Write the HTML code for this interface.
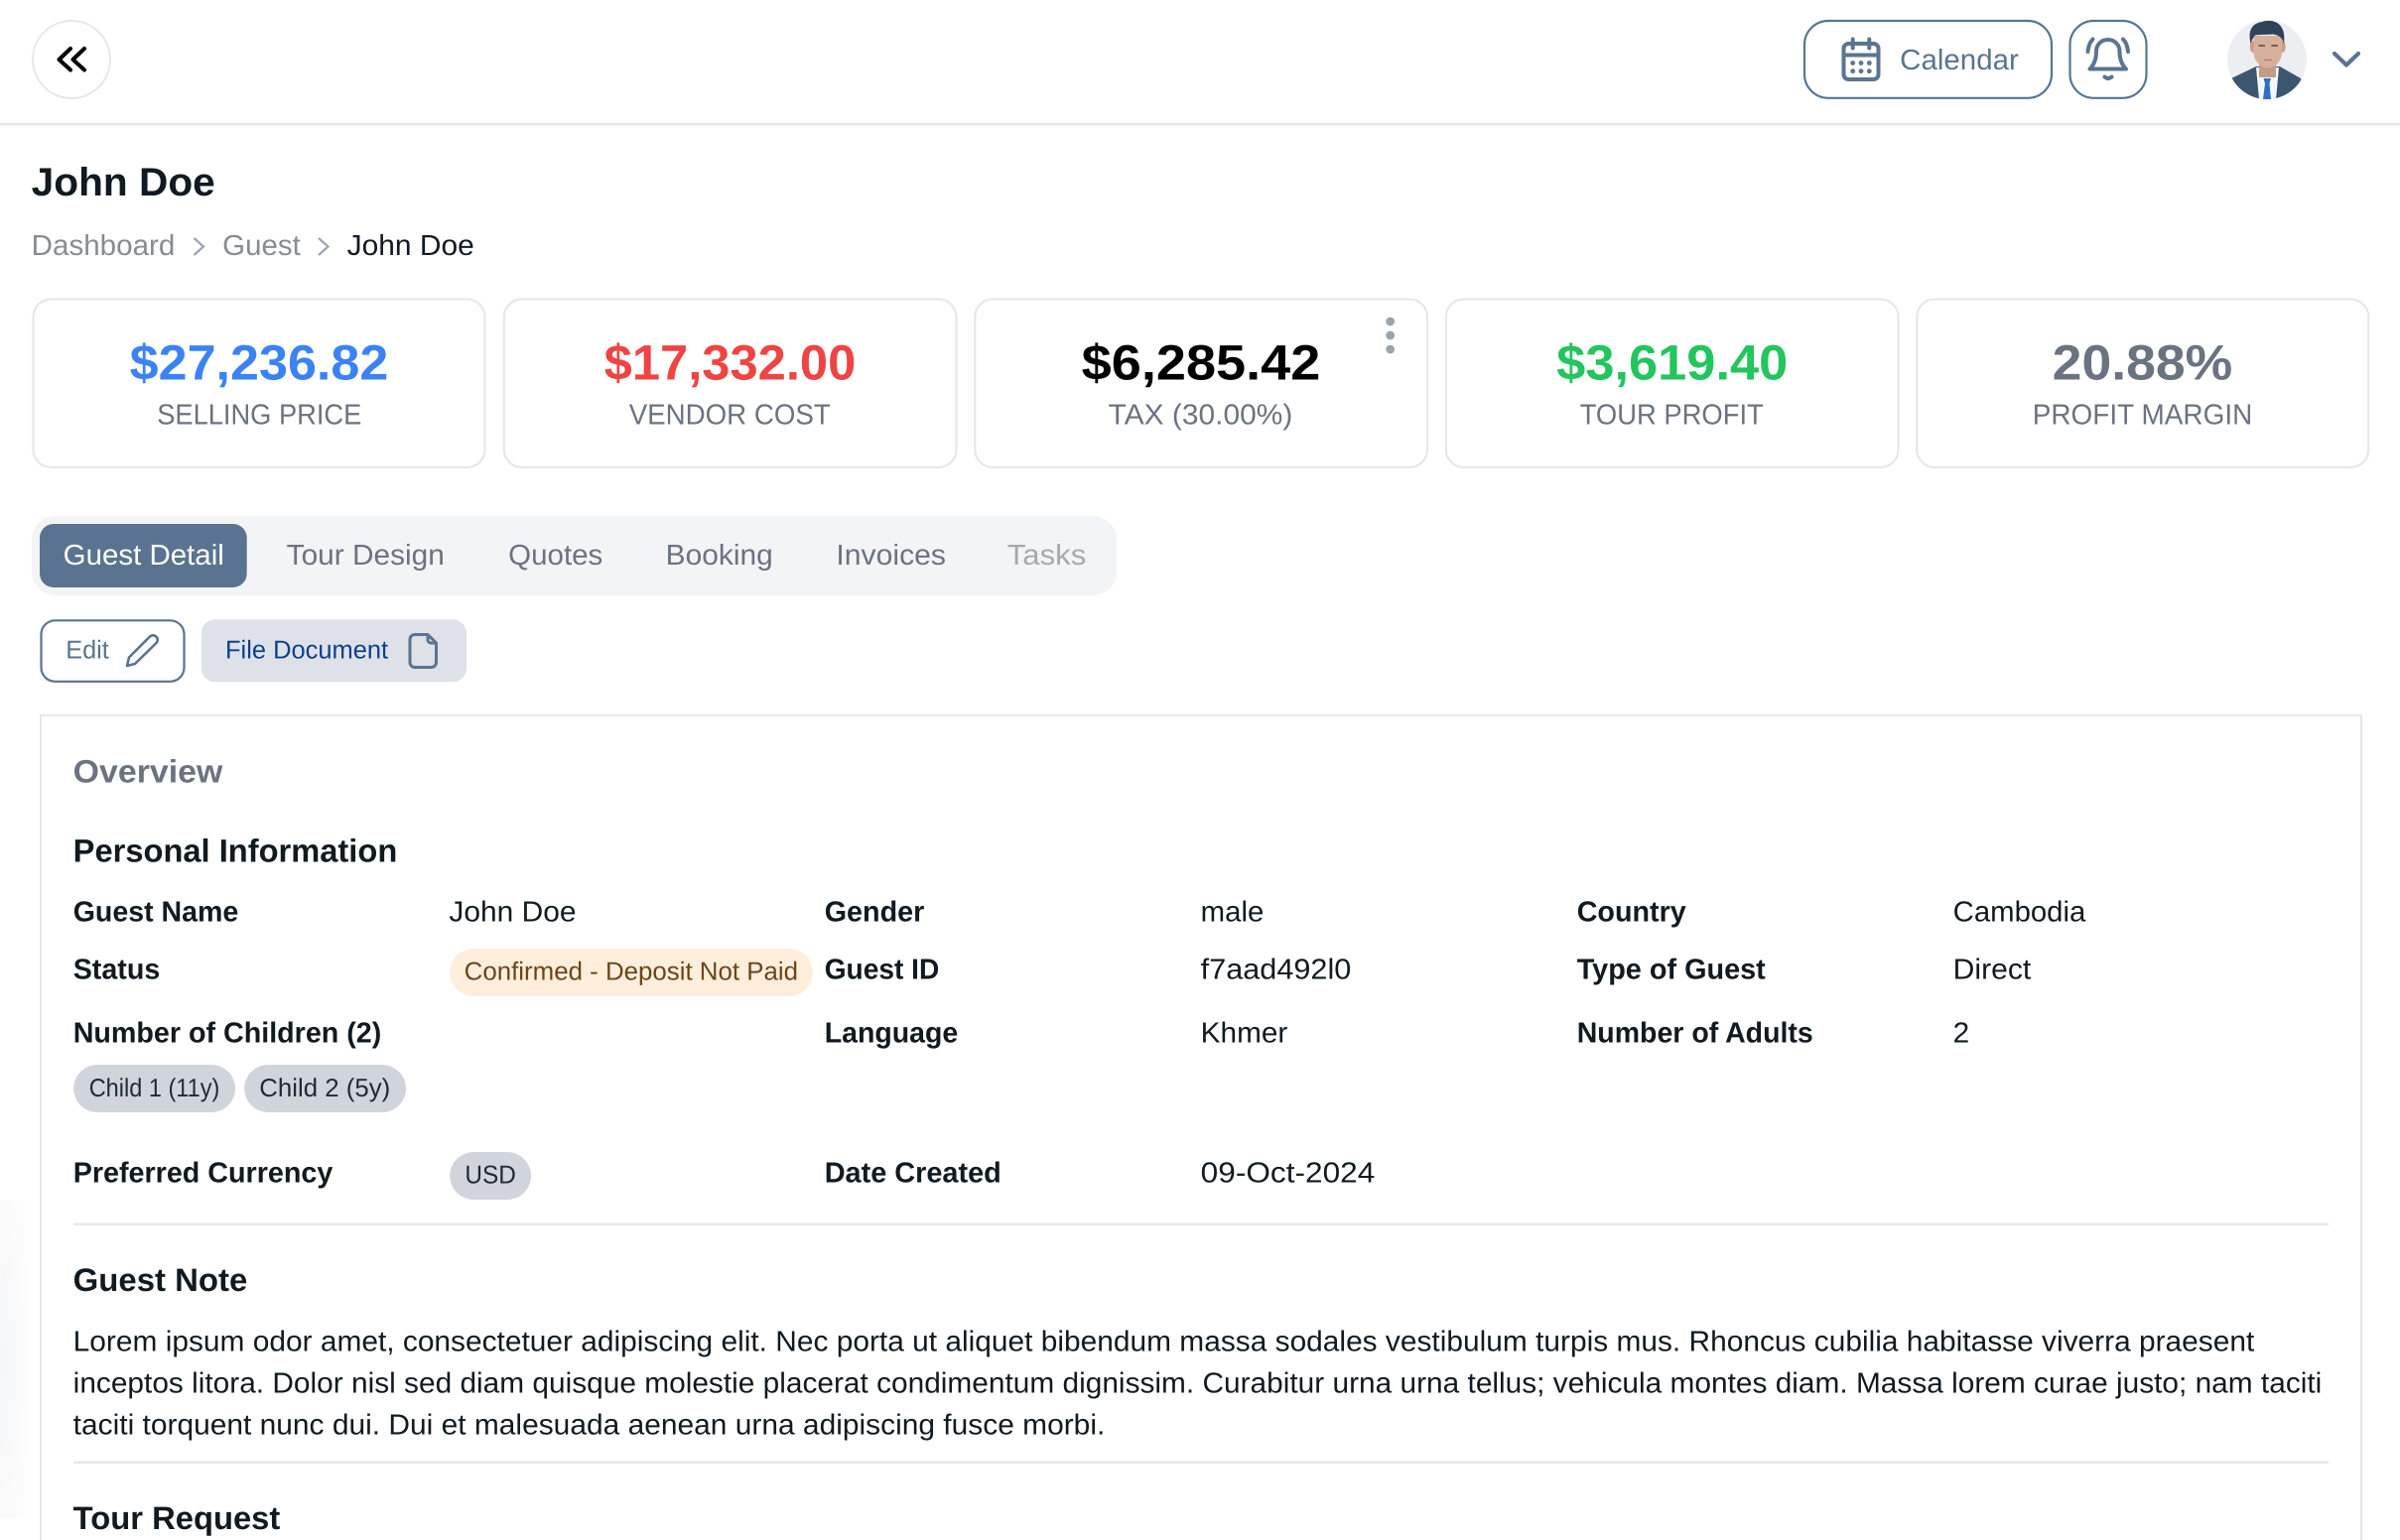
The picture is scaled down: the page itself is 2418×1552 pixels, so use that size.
<!DOCTYPE html>
<html lang="en">
<head>
<meta charset="utf-8">
<title>John Doe - Guest</title>
<style>
html,body{margin:0;padding:0;background:#fff;width:2418px;height:1552px;overflow:hidden}
svg{display:block}
text{font-family:"Liberation Sans",Arial,sans-serif;text-rendering:geometricPrecision;white-space:pre}
.b{font-weight:700}
.t{font-size:29px;fill:#111a20}
.l{font-size:29px;fill:#111a20;font-weight:700}
.h{font-size:32.5px;fill:#111a20;font-weight:700}
.n{font-size:50px;font-weight:700}
.c{font-size:29px;fill:#6b7280}
.tab{font-size:29px;fill:#6b7280}
.s{font-size:25.8px}
</style>
</head>
<body>
<svg xmlns="http://www.w3.org/2000/svg" width="2418" height="1552" viewBox="0 0 2418 1552">
<defs>
<clipPath id="av"><circle cx="2284" cy="60" r="40"/></clipPath>
<radialGradient id="sh" cx="0" cy="0.5" r="1" fx="0" fy="0.5"><stop offset="0" stop-color="#f5f6f7"/><stop offset="0.6" stop-color="#fbfbfc"/><stop offset="1" stop-color="#fff"/></radialGradient>
</defs>
<rect width="2418" height="1552" fill="#fff"/>
<rect x="0" y="1210" width="36" height="320" fill="url(#sh)"/>

<!-- top bar -->
<rect x="0" y="124" width="2418" height="2.5" fill="#e5e7eb"/>
<circle cx="72" cy="60" r="39" fill="#fff" stroke="#e5e7eb" stroke-width="2"/>
<path d="M71 49 L59.5 60 L71 70.5 M85 49 L73.5 60 L85 70.5" fill="none" stroke="#000" stroke-width="4" stroke-linecap="round" stroke-linejoin="round"/>

<rect x="1818" y="21" width="249" height="77.8" rx="24" fill="#fff" stroke="#5a7491" stroke-width="2.2"/>
<g fill="none" stroke="#5a7491" stroke-width="4" stroke-linecap="round" stroke-linejoin="round">
<rect x="1857.5" y="44" width="35" height="36" rx="5"/>
<path d="M1857.5 55.5 H1892.5 M1866.7 39.5 V48.5 M1883.3 39.5 V48.5"/>
</g>
<g fill="#5a7491">
<circle cx="1866.7" cy="63.5" r="2.4"/><circle cx="1875" cy="63.5" r="2.4"/><circle cx="1883.3" cy="63.5" r="2.4"/>
<circle cx="1866.7" cy="71.7" r="2.4"/><circle cx="1875" cy="71.7" r="2.4"/><circle cx="1883.3" cy="71.7" r="2.4"/>
</g>
<text x="1914.2" y="70" font-size="29" fill="#5a7491" textLength="119.6" lengthAdjust="spacingAndGlyphs">Calendar</text>

<rect x="2085.5" y="21" width="77" height="77.8" rx="24" fill="#fff" stroke="#5a7491" stroke-width="2.2"/>
<g fill="none" stroke="#5a7491" stroke-width="4" stroke-linecap="round" stroke-linejoin="round">
<path d="M2105.5 69.5 H2142 C2136.5 64 2135.5 58 2135.5 52 C2135.5 44.5 2130 40 2123.7 40 C2117.5 40 2112 44.5 2112 52 C2112 58 2111 64 2105.5 69.5 Z"/>
<path d="M2103.5 52 C2104 46.5 2105.5 42.5 2108.5 39.5 M2144 52 C2143.5 46.5 2142 42.5 2139 39.5"/>
<path d="M2120.5 77.5 Q2124 80.5 2127.5 77.5"/>
</g>

<g clip-path="url(#av)">
<rect x="2244" y="20" width="80" height="80" fill="#eceef1"/>
<path d="M2248 79 L2273 67 H2297 L2318 79 L2326 100 H2242 Z" fill="#3d5670"/>
<path d="M2273 68 L2296 68 L2293 100 H2276 Z" fill="#f7f8fb"/>
<path d="M2280.5 79 H2288 L2286.5 84 L2288 100 H2280 L2282 84 Z" fill="#2d6fc7"/>
<rect x="2276" y="58" width="17" height="20" fill="#c29c87"/>
<ellipse cx="2270" cy="47" rx="3.2" ry="6" fill="#d09a88"/>
<ellipse cx="2299.5" cy="47" rx="3.2" ry="6" fill="#d09a88"/>
<path d="M2270.5 36 H2299 V52 C2299 63 2291 68.5 2285 68.5 C2279 68.5 2270.5 63 2270.5 52 Z" fill="#d6b09b"/>
<path d="M2267.5 44 C2265 33 2267 24 2279 22 C2290 18.5 2304 23 2301 44 C2299.5 38.5 2297 35.5 2290 34.5 C2283 35 2275 35 2272 35.5 C2270 38 2269 40 2267.5 44 Z" fill="#2f4257"/>
<path d="M2275.5 46 h6.5 M2288.5 46 h6.5" stroke="#6a5650" stroke-width="1.8"/>
<path d="M2281 60.5 h8" stroke="#bd7d6c" stroke-width="1.6"/>
</g>
<path d="M2352 54 L2364 65.5 L2376 54" fill="none" stroke="#5a7491" stroke-width="4.2" stroke-linecap="round" stroke-linejoin="round"/>

<!-- title -->
<text x="31.7" y="197" class="b" font-size="40" fill="#111a20" textLength="185.1" lengthAdjust="spacingAndGlyphs">John Doe</text>
<text x="31.7" y="257" font-size="29" fill="#878c93" textLength="144.6" lengthAdjust="spacingAndGlyphs">Dashboard</text>
<path d="M195.5 240 L205 248.5 L195.5 257 M321 240 L330.5 248.5 L321 257" fill="none" stroke="#9ca3af" stroke-width="2.2"/>
<text x="224.2" y="257" font-size="29" fill="#878c93" textLength="78.6" lengthAdjust="spacingAndGlyphs">Guest</text>
<text x="349.7" y="257" font-size="29" fill="#111827" textLength="128.1" lengthAdjust="spacingAndGlyphs">John Doe</text>

<!-- stat cards -->
<g fill="#fff" stroke="#e5e7eb" stroke-width="2.2">
<rect x="33.5" y="301.5" width="455" height="169.5" rx="18"/>
<rect x="507.8" y="301.5" width="455.7" height="169.5" rx="18"/>
<rect x="982.3" y="301.5" width="455.7" height="169.5" rx="18"/>
<rect x="1456.8" y="301.5" width="455.7" height="169.5" rx="18"/>
<rect x="1931.3" y="301.5" width="455" height="169.5" rx="18"/>
</g>
<text x="130.7" y="382.7" class="n" fill="#3b82f6" textLength="260.6" lengthAdjust="spacingAndGlyphs">$27,236.82</text>
<text x="158.2" y="427.7" class="c" textLength="206.1" lengthAdjust="spacingAndGlyphs">SELLING PRICE</text>
<text x="608.7" y="382.7" class="n" fill="#ef4444" textLength="253.6" lengthAdjust="spacingAndGlyphs">$17,332.00</text>
<text x="633.7" y="427.7" class="c" textLength="203.1" lengthAdjust="spacingAndGlyphs">VENDOR COST</text>
<text x="1089.7" y="382.7" class="n" fill="#000" textLength="240.6" lengthAdjust="spacingAndGlyphs">$6,285.42</text>
<text x="1116.7" y="427.7" class="c" textLength="185.6" lengthAdjust="spacingAndGlyphs">TAX (30.00%)</text>
<g fill="#9ca3af"><circle cx="1400.7" cy="324" r="4.4"/><circle cx="1400.7" cy="338" r="4.4"/><circle cx="1400.7" cy="352" r="4.4"/></g>
<text x="1568.2" y="382.7" class="n" fill="#22c55e" textLength="233.1" lengthAdjust="spacingAndGlyphs">$3,619.40</text>
<text x="1591.7" y="427.7" class="c" textLength="185.1" lengthAdjust="spacingAndGlyphs">TOUR PROFIT</text>
<text x="2067.7" y="382.7" class="n" fill="#6b7280" textLength="181.6" lengthAdjust="spacingAndGlyphs">20.88%</text>
<text x="2047.7" y="427.7" class="c" textLength="221.6" lengthAdjust="spacingAndGlyphs">PROFIT MARGIN</text>

<!-- tabs -->
<rect x="32" y="520" width="1093" height="80" rx="24" fill="#f3f4f6"/>
<rect x="40" y="528" width="208.7" height="64" rx="14" fill="#5a7390"/>
<text x="63.7" y="569" class="tab" style="fill:#fff" textLength="162.1" lengthAdjust="spacingAndGlyphs">Guest Detail</text>
<text x="288.7" y="569" class="tab" textLength="159.1" lengthAdjust="spacingAndGlyphs">Tour Design</text>
<text x="512.2" y="569" class="tab" textLength="95.1" lengthAdjust="spacingAndGlyphs">Quotes</text>
<text x="670.7" y="569" class="tab" textLength="108.1" lengthAdjust="spacingAndGlyphs">Booking</text>
<text x="842.4" y="569" class="tab" textLength="110.6" lengthAdjust="spacingAndGlyphs">Invoices</text>
<text x="1014.7" y="569" class="tab" style="fill:#a5a9b0" textLength="79.6" lengthAdjust="spacingAndGlyphs">Tasks</text>

<!-- buttons -->
<rect x="41.5" y="625.3" width="144" height="61.5" rx="14" fill="#fff" stroke="#5a7390" stroke-width="2.2"/>
<text x="66.2" y="663.3" class="s" fill="#5a7390" textLength="43.6" lengthAdjust="spacingAndGlyphs">Edit</text>
<path d="M128 671 L136 669 L157.5 648 A4.6 4.6 0 0 0 151 641.5 L130 662.5 Z" fill="none" stroke="#5a7390" stroke-width="2.6" stroke-linejoin="round"/>
<rect x="202.8" y="624.3" width="267.2" height="63" rx="14" fill="#dee2e8"/>
<text x="227" y="663.3" class="s" fill="#0b3f8c" textLength="164.1" lengthAdjust="spacingAndGlyphs">File Document</text>
<path d="M418 639.5 H431 L439.5 648 V667.5 A5 5 0 0 1 434.5 672.5 H418 A5 5 0 0 1 413 667.5 V644.5 A5 5 0 0 1 418 639.5 Z M431 639.5 V645 A3 3 0 0 0 434 648 H439.5" fill="none" stroke="#5a7390" stroke-width="3" stroke-linejoin="round"/>

<!-- overview panel -->
<path d="M41 1552 V720.7 H2379 V1552" fill="#fff" stroke="#e5e7eb" stroke-width="2"/>
<text x="73.7" y="788.3" font-size="32.5" class="b" fill="#6b7280" textLength="150.6" lengthAdjust="spacingAndGlyphs">Overview</text>
<text x="73.7" y="868.3" class="h" textLength="326.6" lengthAdjust="spacingAndGlyphs">Personal Information</text>

<text x="73.7" y="928.5" class="l" textLength="166.6" lengthAdjust="spacingAndGlyphs">Guest Name</text>
<text x="452.4" y="928.5" class="t" textLength="128.1" lengthAdjust="spacingAndGlyphs">John Doe</text>
<text x="830.7" y="928.5" class="l" textLength="100.6" lengthAdjust="spacingAndGlyphs">Gender</text>
<text x="1209.7" y="928.5" class="t" textLength="63.6" lengthAdjust="spacingAndGlyphs">male</text>
<text x="1588.7" y="928.5" class="l" textLength="110.1" lengthAdjust="spacingAndGlyphs">Country</text>
<text x="1967.7" y="928.5" class="t" textLength="133.6" lengthAdjust="spacingAndGlyphs">Cambodia</text>

<text x="73.7" y="986.5" class="l" textLength="87.6" lengthAdjust="spacingAndGlyphs">Status</text>
<rect x="453.2" y="956" width="365.8" height="48" rx="24" fill="#feeedb"/>
<text x="467.7" y="987.3" class="s" fill="#6b4518" textLength="336.3" lengthAdjust="spacingAndGlyphs">Confirmed - Deposit Not Paid</text>
<text x="830.7" y="986.5" class="l" textLength="115.6" lengthAdjust="spacingAndGlyphs">Guest ID</text>
<text x="1209.7" y="986.5" class="t" textLength="151.6" lengthAdjust="spacingAndGlyphs">f7aad492l0</text>
<text x="1588.7" y="986.5" class="l" textLength="190.1" lengthAdjust="spacingAndGlyphs">Type of Guest</text>
<text x="1967.7" y="986.5" class="t" textLength="78.6" lengthAdjust="spacingAndGlyphs">Direct</text>

<text x="73.7" y="1050.5" class="l" textLength="310.6" lengthAdjust="spacingAndGlyphs">Number of Children (2)</text>
<text x="830.7" y="1050.5" class="l" textLength="134.6" lengthAdjust="spacingAndGlyphs">Language</text>
<text x="1209.7" y="1050.5" class="t" textLength="87.6" lengthAdjust="spacingAndGlyphs">Khmer</text>
<text x="1588.7" y="1050.5" class="l" textLength="238.1" lengthAdjust="spacingAndGlyphs">Number of Adults</text>
<text x="1967.7" y="1050.5" class="t" textLength="16.6" lengthAdjust="spacingAndGlyphs">2</text>

<rect x="74.2" y="1073" width="162.8" height="48" rx="24" fill="#d1d5db"/>
<text x="89.7" y="1105" class="s" fill="#1f2937" textLength="131.6" lengthAdjust="spacingAndGlyphs">Child 1 (11y)</text>
<rect x="246.2" y="1073" width="162.8" height="48" rx="24" fill="#d1d5db"/>
<text x="261.2" y="1105" class="s" fill="#1f2937" textLength="132.1" lengthAdjust="spacingAndGlyphs">Child 2 (5y)</text>

<text x="73.7" y="1191.3" class="l" textLength="261.6" lengthAdjust="spacingAndGlyphs">Preferred Currency</text>
<rect x="453.2" y="1161" width="81.8" height="48" rx="24" fill="#d1d5db"/>
<text x="468.4" y="1192.7" class="s" fill="#1f2937" textLength="51.4" lengthAdjust="spacingAndGlyphs">USD</text>
<text x="830.7" y="1191.3" class="l" textLength="178.1" lengthAdjust="spacingAndGlyphs">Date Created</text>
<text x="1209.7" y="1191.3" class="t" textLength="175.6" lengthAdjust="spacingAndGlyphs">09-Oct-2024</text>

<rect x="74" y="1232.5" width="2272" height="2.5" fill="#e5e7eb"/>
<text x="73.7" y="1301" class="h" textLength="175.6" lengthAdjust="spacingAndGlyphs">Guest Note</text>
<text x="73.7" y="1361.7" class="t" textLength="2197.6" lengthAdjust="spacingAndGlyphs">Lorem ipsum odor amet, consectetuer adipiscing elit. Nec porta ut aliquet bibendum massa sodales vestibulum turpis mus. Rhoncus cubilia habitasse viverra praesent</text>
<text x="73.7" y="1403.7" class="t" textLength="2265.6" lengthAdjust="spacingAndGlyphs">inceptos litora. Dolor nisl sed diam quisque molestie placerat condimentum dignissim. Curabitur urna urna tellus; vehicula montes diam. Massa lorem curae justo; nam taciti</text>
<text x="73.7" y="1445.7" class="t" textLength="1039.6" lengthAdjust="spacingAndGlyphs">taciti torquent nunc dui. Dui et malesuada aenean urna adipiscing fusce morbi.</text>
<rect x="74" y="1472.5" width="2272" height="2.5" fill="#e5e7eb"/>
<text x="73.7" y="1541" class="h" textLength="208.6" lengthAdjust="spacingAndGlyphs">Tour Request</text>
</svg>
</body>
</html>
